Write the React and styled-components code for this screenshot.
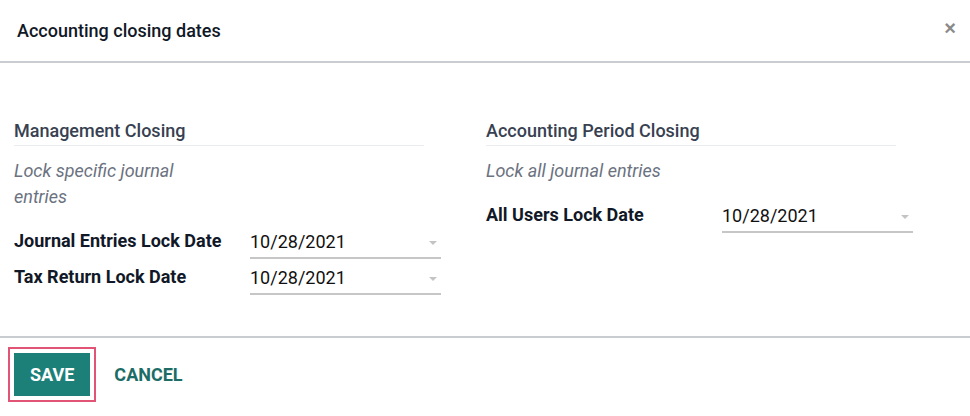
import React from 'react'
import styled, { createGlobalStyle } from 'styled-components'

const GlobalStyle = createGlobalStyle`
  html, body {
    margin: 0;
    padding: 0;
    background: #fff;
  }
  body {
    font-family: Roboto, 'Liberation Sans', Arial, sans-serif;
    color: #111827;
  }
`

const Modal = styled.div`
  display: flex;
  flex-direction: column;
  height: 100vh;
  width: 970px;
`

const Header = styled.header`
  display: flex;
  justify-content: space-between;
  align-items: center;
  height: 61px;
  padding: 0 14px 0 17px;
  border-bottom: 2px solid #c9ccd0;
`

const Title = styled.h4`
  margin: 0;
  font-size: 18px;
  font-weight: 500;
  color: #111827;
`

const Close = styled.button`
  border: none;
  background: none;
  padding: 0;
  margin-top: -6px;
  font-size: 20px;
  line-height: 1;
  font-weight: 700;
  color: #8a8a8a;
  cursor: pointer;
`

const Body = styled.div`
  flex: 1;
  display: grid;
  grid-template-columns: 472px 472px;
  align-content: start;
  padding: 56px 14px 0;
`

const Section = styled.section`
  display: flex;
  flex-direction: column;
`

const Heading = styled.div`
  width: 410px;
  font-size: 18px;
  font-weight: 500;
  line-height: 24px;
  color: #374151;
  padding-bottom: 2px;
  border-bottom: 1px solid #e9ebee;
`

const Description = styled.div`
  width: 200px;
  margin-top: 12px;
  font-size: 18px;
  font-style: italic;
  line-height: 26px;
  color: #6b7280;
`

const Rows = styled.div`
  display: grid;
  grid-template-columns: 236px 191px;
  grid-auto-rows: 36px;
  margin-top: 13px;
`

const Label = styled.label`
  font-size: 18px;
  font-weight: 700;
  line-height: 36px;
  color: #111827;
  white-space: nowrap;
`

const DateField = styled.div`
  display: flex;
  align-items: center;
  height: 32px;
  padding-top: 2px;
  border-bottom: 2px solid #c6c6c6;
`

const DateValue = styled.span`
  flex: 1;
  font-size: 18px;
  color: #111;
`

const Caret = styled.span`
  width: 0;
  height: 0;
  margin: 4px 4px 0 0;
  border-left: 4px solid transparent;
  border-right: 4px solid transparent;
  border-top: 4px solid #c4c4c4;
`

const Footer = styled.footer`
  display: flex;
  align-items: center;
  gap: 24px;
  padding: 15px 14px 20px;
  border-top: 2px solid #c9ccd0;
`

const Button = styled.button`
  height: 43px;
  padding: 0 ${(p) => (p.primary ? '16px' : '0')};
  border: none;
  background: ${(p) => (p.primary ? '#1c8078' : 'transparent')};
  color: ${(p) => (p.primary ? '#fff' : '#1b6d66')};
  outline: ${(p) => (p.primary ? '2px solid #e25475' : 'none')};
  outline-offset: 4px;
  font-family: Roboto, 'Liberation Sans', Arial, sans-serif;
  font-size: 18px;
  font-weight: 700;
  text-transform: uppercase;
  cursor: pointer;
`

const DateRow = ({ label, value }) => (
  <>
    <Label>{label}</Label>
    <DateField>
      <DateValue>{value}</DateValue>
      <Caret />
    </DateField>
  </>
)

export default function App() {
  return (
    <Modal>
      <GlobalStyle />
      <Header>
        <Title>Accounting closing dates</Title>
        <Close aria-label='Close'>×</Close>
      </Header>
      <Body>
        <Section>
          <Heading>Management Closing</Heading>
          <Description>Lock specific journal entries</Description>
          <Rows>
            <DateRow label='Journal Entries Lock Date' value='10/28/2021' />
            <DateRow label='Tax Return Lock Date' value='10/28/2021' />
          </Rows>
        </Section>
        <Section>
          <Heading>Accounting Period Closing</Heading>
          <Description>Lock all journal entries</Description>
          <Rows>
            <DateRow label='All Users Lock Date' value='10/28/2021' />
          </Rows>
        </Section>
      </Body>
      <Footer>
        <Button primary>Save</Button>
        <Button>Cancel</Button>
      </Footer>
    </Modal>
  )
}
